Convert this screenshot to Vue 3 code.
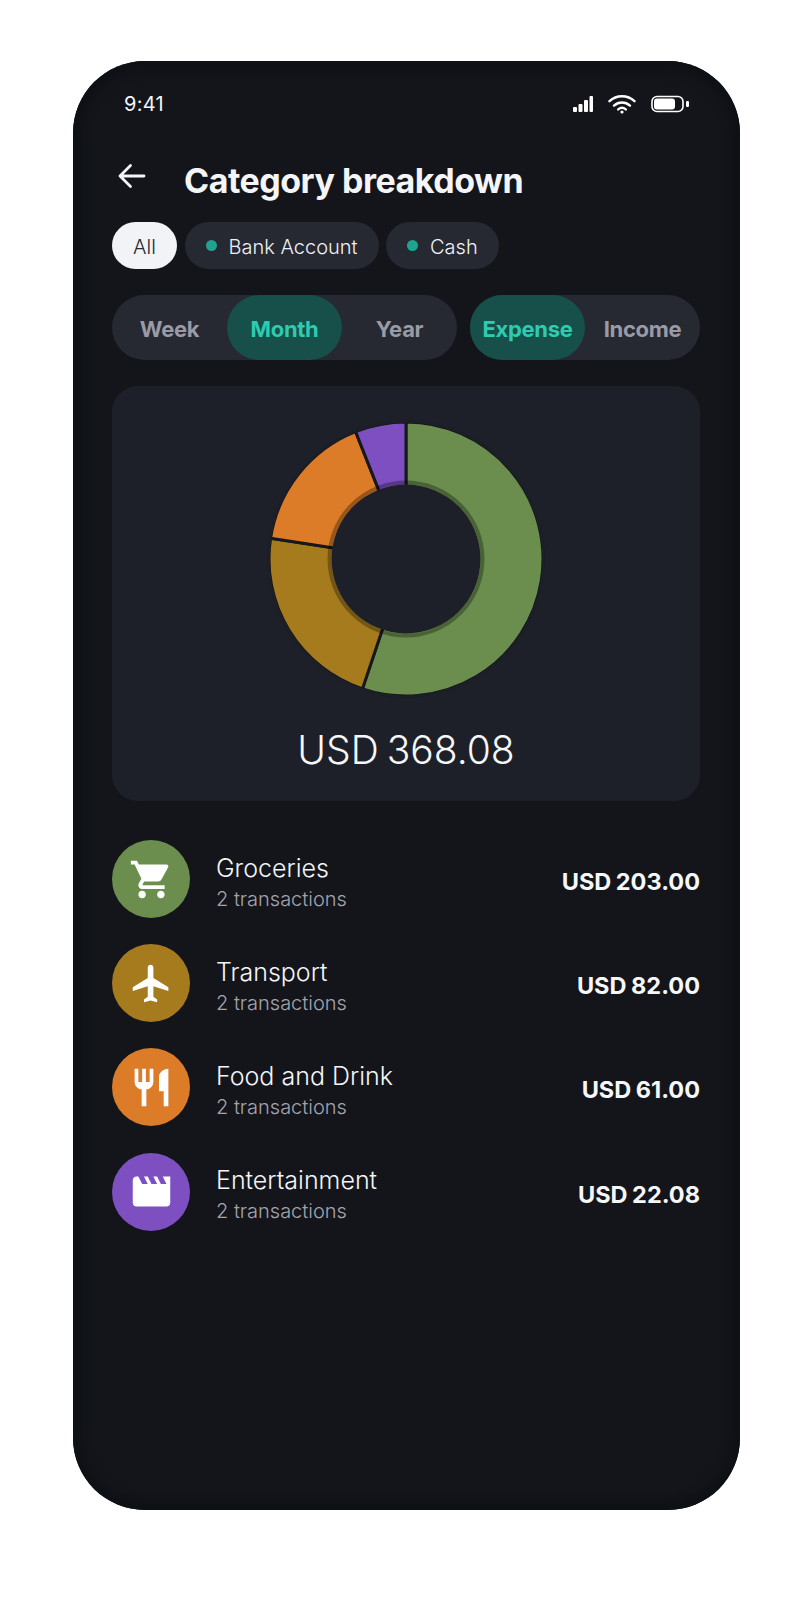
<script setup>
const cats = [
  { name: 'Groceries', amount: 203, label: 'USD 203.00', color: '#6b8e4e', icon: 'M7 18c-1.1 0-1.99.9-1.99 2S5.9 22 7 22s2-.9 2-2-.9-2-2-2zM1 2v2h2l3.6 7.59-1.35 2.45c-.16.28-.25.61-.25.96 0 1.1.9 2 2 2h12v-2H7.42c-.14 0-.25-.11-.25-.25l.03-.12.9-1.63h7.45c.75 0 1.41-.41 1.75-1.03l3.58-6.49c.08-.14.12-.31.12-.48 0-.55-.45-1-1-1H5.21l-.94-2H1zm16 16c-1.1 0-1.99.9-1.99 2s.89 2 1.99 2 2-.9 2-2-.9-2-2-2z' },
  { name: 'Transport', amount: 82, label: 'USD 82.00', color: '#a67b1e', icon: 'M21 16v-2l-8-5V3.5c0-.83-.67-1.5-1.5-1.5S10 2.67 10 3.5V9l-8 5v2l8-2.5V19l-2 1.5V22l3.5-1 3.5 1v-1.5L13 19v-5.5l8 2.5z' },
  { name: 'Food and Drink', amount: 61, label: 'USD 61.00', color: '#dc7b28', icon: 'M11 9H9V2H7v7H5V2H3v7c0 2.12 1.66 3.84 3.75 3.97V22h2.5v-9.03C11.34 12.84 13 11.12 13 9V2h-2v7zm5-3v8h2.5v8H21V2c-2.76 0-5 2.24-5 4z' },
  { name: 'Entertainment', amount: 22.08, label: 'USD 22.08', color: '#7e4fc0', icon: 'M18 4l2 4h-3l-2-4h-2l2 4h-3l-2-4H8l2 4H7L5 4H4c-1.1 0-1.99.9-1.99 2L2 18c0 1.1.9 2 2 2h16c1.1 0 2-.9 2-2V4h-4z' },
]
const total = cats.reduce((s, c) => s + c.amount, 0)
const R = 137, r = 68, C = 140
const pt = (rad, a) => `${(C + rad * Math.sin(a)).toFixed(2)} ${(C - rad * Math.cos(a)).toFixed(2)}`
let acc = 0
const slices = cats.map((c) => {
  const a0 = (acc / total) * Math.PI * 2
  acc += c.amount
  const a1 = (acc / total) * Math.PI * 2
  const large = a1 - a0 > Math.PI ? 1 : 0
  return {
    color: c.color,
    d: `M${pt(R, a0)} A${R} ${R} 0 ${large} 1 ${pt(R, a1)} L${pt(r, a1)} A${r} ${r} 0 ${large} 0 ${pt(r, a0)} Z`,
  }
})
</script>

<template>
  <div class="page">
    <div class="phone">
      <div class="status">
        <span class="time">9:41</span>
        <div class="status-icons">
          <svg width="20" height="16" viewBox="0 0 20 16" fill="#fff">
            <rect x="0" y="11" width="4" height="5" rx="1" />
            <rect x="5.5" y="8" width="4" height="8" rx="1" />
            <rect x="11" y="4" width="4" height="12" rx="1" />
            <rect x="16.5" y="0" width="3.5" height="16" rx="1" />
          </svg>
          <svg width="28" height="20" viewBox="0 0 28 20" fill="none" stroke="#fff" stroke-width="2.4" stroke-linecap="round">
            <path d="M1.5 7.2C8.6.6 19.4.6 26.5 7.2" />
            <path d="M6 11.6c4.6-4.2 11.4-4.2 16 0" />
            <path d="M10.2 15.4c2.2-1.8 5.4-1.8 7.6 0" />
            <circle cx="14" cy="18" r="1.6" fill="#fff" stroke="none" />
          </svg>
          <svg width="38" height="18" viewBox="0 0 38 18" fill="none">
            <rect x="1" y="1.5" width="31" height="15" rx="5" stroke="#fff" stroke-width="1.6" />
            <rect x="3" y="3.5" width="21" height="11" rx="3" fill="#fff" />
            <rect x="35" y="6" width="3" height="6" rx="1.2" fill="#fff" />
          </svg>
        </div>
      </div>

      <header class="header">
        <svg class="back" width="28" height="26" viewBox="0 0 28 26" fill="none" stroke="#f4f5f8" stroke-width="2.8" stroke-linecap="round" stroke-linejoin="round">
          <path d="M26 13H2M12.5 2.5 2 13l10.5 10.5" />
        </svg>
        <h1 class="title">Category breakdown</h1>
      </header>

      <div class="chips">
        <span class="chip chip-all">All</span>
        <span class="chip"><i class="dot"></i>Bank Account</span>
        <span class="chip"><i class="dot"></i>Cash</span>
      </div>

      <div class="toggles">
        <div class="seg seg-period">
          <span class="seg-item">Week</span>
          <span class="seg-item on">Month</span>
          <span class="seg-item">Year</span>
        </div>
        <div class="seg seg-kind">
          <span class="seg-item on">Expense</span>
          <span class="seg-item">Income</span>
        </div>
      </div>

      <section class="card">
        <svg class="donut" width="280" height="280" viewBox="0 0 280 280">
          <path v-for="(s, i) in slices" :key="i" :d="s.d" :fill="s.color" stroke="#16181c" stroke-width="3" stroke-linejoin="miter" />
          <circle cx="140" cy="140" r="76.5" fill="none" stroke="#000" stroke-opacity="0.3" stroke-width="4" />
          <circle cx="140" cy="140" r="74.5" fill="#1d2028" />
          <circle cx="140" cy="140" r="137.5" fill="none" stroke="#1d2028" stroke-width="2" />
        </svg>
        <div class="total">USD 368.08</div>
      </section>

      <ul class="list">
        <li v-for="c in cats" :key="c.name" class="row">
          <span class="avatar" :style="{ background: c.color }">
            <svg width="45" height="45" viewBox="0 0 24 24" fill="#fff"><path :d="c.icon" /></svg>
          </span>
          <div class="info">
            <div class="name">{{ c.name }}</div>
            <div class="sub">2 transactions</div>
          </div>
          <div class="amount">{{ c.label }}</div>
        </li>
      </ul>
    </div>
  </div>
</template>

<style scoped>
.page {
  width: 812px;
  height: 1604px;
  background: #fff;
  padding: 61px 72.5px 0;
  box-sizing: border-box;
  font-family: Inter, "Noto Sans", sans-serif;
  color: #f4f5f8;
}
.phone {
  width: 667px;
  height: 1449px;
  box-sizing: border-box;
  padding: 26px 39.5px 0 39.5px;
  border-radius: 72px;
  background: #13151a;
  box-shadow: inset 0 0 8px 9px #0e1115;
}
.status {
  height: 34px;
  display: flex;
  align-items: center;
  justify-content: space-between;
  padding: 0 11px 0 12px;
}
.time {
  font-size: 20px;
  font-weight: 400;
  letter-spacing: 0.3px;
}
.status-icons {
  display: flex;
  align-items: center;
  gap: 15px;
}
.header {
  height: 44px;
  margin-top: 37px;
  display: flex;
  align-items: center;
  padding-left: 6px;
}
.back {
  margin-right: 38px;
  margin-top: -8px;
}
.title {
  margin: 0;
  font-size: 34px;
  font-weight: 700;
  letter-spacing: -0.5px;
  white-space: nowrap;
}
.chips {
  margin-top: 20px;
  display: flex;
  gap: 7.5px;
}
.chip {
  height: 47px;
  box-sizing: border-box;
  padding: 2px 21px 0;
  border-radius: 23.5px;
  background: #262932;
  display: flex;
  align-items: center;
  font-size: 20px;
  font-weight: 300;
  color: #f0f1f4;
}
.chip-all {
  width: 65px;
  padding: 2px 0 0;
  justify-content: center;
  background: #f2f3f7;
  color: #262932;
}
.dot {
  width: 11px;
  height: 11px;
  border-radius: 50%;
  background: #20a38f;
  margin-right: 12px;
  margin-top: -2px;
}
.toggles {
  margin-top: 26px;
  display: flex;
  justify-content: space-between;
}
.seg {
  height: 65px;
  border-radius: 32.5px;
  background: #262932;
  display: flex;
}
.seg-period { width: 345px; }
.seg-kind { width: 230px; }
.seg-item {
  width: 115px;
  flex: none;
  box-sizing: border-box;
  padding-top: 3px;
  display: flex;
  align-items: center;
  justify-content: center;
  font-size: 22px;
  font-weight: 700;
  letter-spacing: -0.3px;
  color: #9a9ba6;
  border-radius: 32.5px;
}
.seg-item.on {
  background: #17504a;
  color: #2ecbb0;
}
.card {
  margin-top: 26px;
  height: 415px;
  box-sizing: border-box;
  padding-top: 33px;
  border-radius: 26px;
  background: #1d2028;
  display: flex;
  flex-direction: column;
  align-items: center;
}
.donut {
  display: block;
  flex: none;
}
.total {
  margin-top: 27px;
  font-size: 39px;
  line-height: 48px;
  font-weight: 300;
  word-spacing: -3px;
  color: #f6f7f9;
}
.list {
  list-style: none;
  margin: 39px 0 0;
  padding: 0;
  display: flex;
  flex-direction: column;
  gap: 26.2px;
}
.row {
  height: 78px;
  display: flex;
  align-items: center;
}
.avatar {
  width: 78px;
  height: 78px;
  border-radius: 50%;
  display: flex;
  align-items: center;
  justify-content: center;
  flex: none;
}
.info {
  margin-left: 26px;
  padding-top: 7px;
  flex: 1;
}
.name {
  font-size: 25px;
  line-height: 32px;
  font-weight: 300;
  color: #f4f5f8;
}
.sub {
  font-size: 20px;
  line-height: 30px;
  font-weight: 300;
  color: #a3a4ad;
}
.amount {
  padding-top: 5px;
  font-size: 23.5px;
  font-weight: 700;
  word-spacing: -1px;
  color: #f6f7f9;
}
</style>
